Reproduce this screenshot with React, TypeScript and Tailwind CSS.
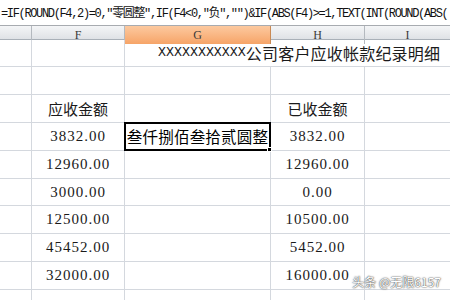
const rowHeights = [27, 28, 28, 28, 28, 27, 28, 28, 28, 12];

const cjk = "font-['Noto_Sans_CJK_SC',sans-serif]";
const num = "font-['Liberation_Serif','Noto_Sans_CJK_SC',serif] text-[15px] tracking-[1px]";

type Row = { f?: string; g?: string; h?: string; head?: boolean; sel?: boolean; title?: boolean };

const rows: Row[] = [
  { title: true },
  {},
  { f: "应收金额", h: "已收金额", head: true },
  { f: "3832.00", g: "叁仟捌佰叁拾贰圆整", h: "3832.00", sel: true },
  { f: "12960.00", h: "12960.00" },
  { f: "3000.00", h: "0.00" },
  { f: "12500.00", h: "10500.00" },
  { f: "45452.00", h: "5452.00" },
  { f: "32000.00", h: "16000.00" },
  {},
];

function Cell({ children, className = "" }: { children?: React.ReactNode; className?: string }) {
  return (
    <div className={"flex items-center justify-center border-r border-[#d4d8de] text-[#1a1a1a] " + className}>
      {children}
    </div>
  );
}

export default function App() {
  return (
    <div className="relative h-[300px] w-[450px] overflow-hidden bg-white">
      {/* formula bar */}
      <div className="flex h-[26px] items-end border-b border-[#a7abb0] bg-white pb-[2px]">
        <div className="whitespace-nowrap pl-[1px] font-['Liberation_Mono','Noto_Sans_CJK_SC',monospace] text-[12px] tracking-[-1.35px] text-[#111]">
          =IF(ROUND(F4,2)=0,"零圆整",IF(F4&lt;0,"负","")&amp;IF(ABS(F4)&gt;=1,TEXT(INT(ROUND(ABS(
        </div>
      </div>

      {/* column headers */}
      <div className="grid h-[14px] grid-cols-[32px_93px_146px_94px_1fr] border-b border-[#a9b0b8] bg-gradient-to-b from-[#f4f5f7] to-[#dfe2e6] font-['Liberation_Serif',serif] text-[12px] text-[#3a3a3a]">
        <div className="border-r border-[#b4b9bf]" />
        <div className="flex items-center justify-center border-r border-[#b4b9bf]">F</div>
        <div className="flex items-center justify-center border-r border-[#c98a55] bg-gradient-to-b from-[#fcc99f] to-[#f6a467]">G</div>
        <div className="flex items-center justify-center border-r border-[#b4b9bf]">H</div>
        <div className="flex items-center justify-center">I</div>
      </div>

      {/* grid */}
      {rows.map((r, i) => (
        <div
          key={i}
          className="grid grid-cols-[32px_93px_146px_94px_1fr] border-b border-[#d4d8de]"
          style={{ height: rowHeights[i] }}
        >
          <Cell />
          <Cell className={r.head ? cjk + " text-[15px] pt-[2px]" : num}>{r.f}</Cell>
          {r.title ? (
            <div className="col-span-3 flex items-center whitespace-nowrap pl-[33px] text-[#1a1a1a]">
              <span className="font-['Liberation_Mono',monospace] text-[13.3px]">XXXXXXXXXXX</span>
              <span className={cjk + " text-[16px] tracking-[0.2px]"}>公司客户应收帐款纪录明细</span>
            </div>
          ) : (
            <>
              {r.sel ? (
                <div className="relative -mb-px -ml-px -mt-px flex items-center justify-center border-2 border-black">
                  <span className={cjk + " text-[15.5px] tracking-[0.2px] whitespace-nowrap"}>{r.g}</span>
                  <div className="absolute -bottom-[3px] -right-[3px] h-[5px] w-[5px] border border-white bg-black" />
                </div>
              ) : (
                <Cell />
              )}
              <Cell className={r.head ? cjk + " text-[15px] pt-[2px]" : num}>{r.h}</Cell>
              <Cell className="border-r-0" />
            </>
          )}
        </div>
      ))}

      {/* watermark */}
      <div className="absolute bottom-[9px] right-[9px] font-['Noto_Sans_CJK_SC',sans-serif] text-[12px] text-white [text-shadow:0_0_1px_#333,0_0_2px_#555]">
        头条 @无限6157
      </div>
    </div>
  );
}
